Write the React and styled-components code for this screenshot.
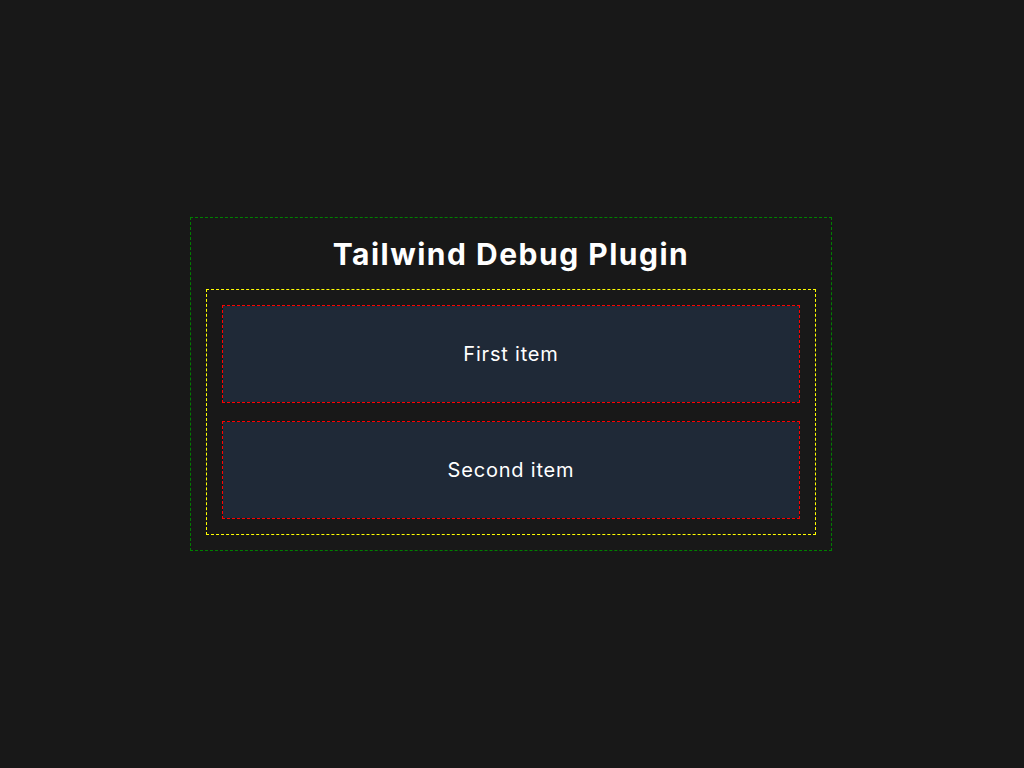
import React from "react";
import styled, { createGlobalStyle } from "styled-components";

const GlobalStyle = createGlobalStyle`
  html, body {
    margin: 0;
    padding: 0;
    background: #181818;
  }
  body {
    font-family: Inter, "Noto Sans", sans-serif;
    color: #ffffff;
  }
`;

const Page = styled.div`
  min-height: 100vh;
  display: flex;
  align-items: center;
  justify-content: center;
  padding-right: 2px;
`;

const Panel = styled.div`
  width: 640px;
  box-sizing: border-box;
  padding: 16px;
  outline: 1px dashed #008000;
`;

const Title = styled.h1`
  margin: 0 0 16px;
  font-size: 30px;
  line-height: 40px;
  font-weight: 700;
  letter-spacing: 1.5px;
  text-align: center;
`;

const List = styled.div`
  display: flex;
  flex-direction: column;
  gap: 20px;
  padding: 16px;
  outline: 1px dashed #ffff00;
`;

const Item = styled.div`
  height: 96px;
  display: flex;
  align-items: center;
  justify-content: center;
  background: #1f2937;
  outline: 1px dashed #ff0000;
  font-size: 20px;
  line-height: 28px;
  letter-spacing: 0.8px;
`;

export default function App() {
  return (
    <>
      <GlobalStyle />
      <Page>
        <Panel>
          <Title>Tailwind Debug Plugin</Title>
          <List>
            <Item>First item</Item>
            <Item>Second item</Item>
          </List>
        </Panel>
      </Page>
    </>
  );
}
